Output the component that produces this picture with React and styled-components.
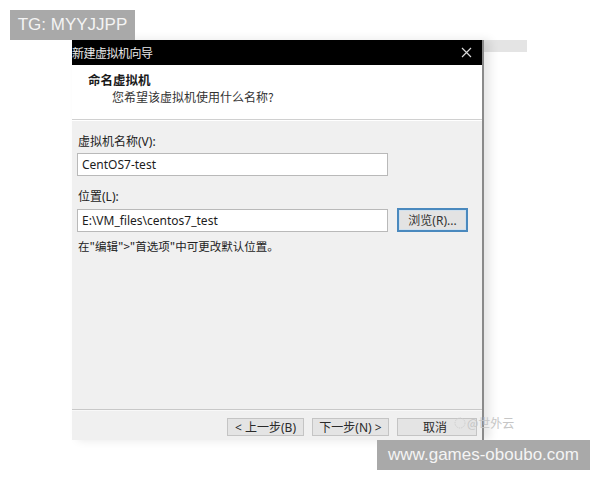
import styled, { createGlobalStyle } from "styled-components";

const GlobalStyle = createGlobalStyle`
	html, body {
		margin: 0;
		background: #ffffff;
	}
	body {
		width: 600px;
		height: 480px;
		overflow: hidden;
		position: relative;
		font-family: "Noto Sans", "Noto Sans CJK SC", sans-serif;
	}
`;

const Scene = styled.div`
	display: flex;
	align-items: flex-start;
	padding: 40px 0 0 72px;
`;

const Window = styled.div`
	width: 410px;
	height: 400px;
	display: flex;
	flex-direction: column;
	background: #f0f0f0;
	border-right: 2px solid #8a8a8a;
	box-shadow: 6px 0 9px rgba(0, 0, 0, 0.1);
	position: relative;
	z-index: 1;
`;

const BackWindow = styled.div`
	width: 43px;
	height: 12px;
	background: #e4e4e4;
`;

const TitleBar = styled.div`
	height: 25px;
	background: #000000;
	display: flex;
	align-items: center;
	justify-content: space-between;
	color: #e8e8e8;
	font-family: "Noto Sans CJK SC", sans-serif;
	font-size: 12px;
	letter-spacing: -0.5px;
`;

const Close = styled.span`
	width: 28px;
	display: flex;
	justify-content: center;
	margin-right: 2px;
`;

const Header = styled.div`
	height: 55px;
	background: #ffffff;
	border-bottom: 1px solid #d0d0d0;
	box-shadow: 0 1px 0 #ffffff;
	padding: 6px 0 0 16px;
	box-sizing: border-box;
	font-family: "Noto Sans CJK SC", sans-serif;
	color: #1a1a1a;
`;

const Heading = styled.div`
	font-size: 12.5px;
	font-weight: 700;
	line-height: 17px;
`;

const Subheading = styled.div`
	font-size: 12px;
	line-height: 17px;
	padding-left: 24px;
	color: #333;
`;

const Body = styled.div`
	flex: 1;
	padding: 14px 0 0 5px;
	display: flex;
	flex-direction: column;
	font-family: "Noto Sans", "Noto Sans CJK SC", sans-serif;
	font-size: 12px;
	color: #222;
`;

const Label = styled.div`
	height: 16px;
	line-height: 16px;
	margin: ${(p) => p.$top || 0}px 0 3px 1px;
`;

const Row = styled.div`
	display: flex;
	align-items: center;
	gap: 9px;
`;

const Field = styled.div`
	width: 311px;
	height: 23px;
	box-sizing: border-box;
	background: #ffffff;
	border: 1px solid #b9b9b9;
	padding: 0 4px;
	display: flex;
	align-items: center;
	color: #1c1c1c;
`;

const Browse = styled.div`
	width: 71px;
	height: 24px;
	box-sizing: border-box;
	border: 2px solid #4a89be;
	background: #e3e3e3;
	display: flex;
	align-items: center;
	justify-content: center;
	color: #333;
	box-shadow: inset 0 0 0 1px #cfe0ee;
`;

const Hint = styled.div`
	margin: 6px 0 0 1px;
	font-family: "Noto Sans CJK SC", sans-serif;
	font-size: 11.5px;
	color: #222;
`;

const Footer = styled.div`
	height: 31px;
	border-top: 1px solid #c8c8c8;
	box-shadow: inset 0 1px 0 #f8f8f8;
	box-sizing: border-box;
	display: flex;
	align-items: flex-start;
	padding: 8px 0 0 155px;
	gap: 8px;
`;

const Button = styled.div`
	width: ${(p) => p.$w || 77}px;
	height: 18px;
	box-sizing: border-box;
	border: 1px solid #c4c4c4;
	background: #e4e4e4;
	display: flex;
	align-items: center;
	justify-content: ${(p) => (p.$right ? "flex-end" : "center")};
	padding-right: ${(p) => (p.$right ? "29px" : "0")};
	font-family: "Noto Sans", "Noto Sans CJK SC", sans-serif;
	font-size: 12px;
	color: #2a2a2a;
`;

const Mark = styled.div`
	position: absolute;
	left: ${(p) => p.$x}px;
	top: ${(p) => p.$y}px;
	width: ${(p) => p.$w}px;
	height: 30px;
	background: #a9a9a9;
	color: #f4f4f4;
	font-family: "Liberation Sans", Arial, sans-serif;
	font-size: 17px;
	display: flex;
	align-items: center;
	justify-content: center;
	z-index: 2;
`;

const Credit = styled.div`
	position: absolute;
	left: 454px;
	top: 414px;
	color: #c6c6c6;
	font-family: "Noto Sans CJK SC", sans-serif;
	font-size: 12px;
	z-index: 2;
	display: flex;
	align-items: center;
	gap: 1px;
`;

function App() {
	return (
		<>
			<GlobalStyle />
			<Scene>
				<Window>
					<TitleBar>
						<span>新建虚拟机向导</span>
						<Close>
							<svg width="11" height="11" viewBox="0 0 11 11">
								<path d="M1 1 L10 10 M10 1 L1 10" stroke="#d8d8d8" strokeWidth="1.2" />
							</svg>
						</Close>
					</TitleBar>
					<Header>
						<Heading>命名虚拟机</Heading>
						<Subheading>您希望该虚拟机使用什么名称?</Subheading>
					</Header>
					<Body>
						<Label>虚拟机名称(V):</Label>
						<Field>CentOS7-test</Field>
						<Label $top={13}>位置(L):</Label>
						<Row>
							<Field>E:\VM_files\centos7_test</Field>
							<Browse>浏览(R)...</Browse>
						</Row>
						<Hint>在"编辑"&gt;"首选项"中可更改默认位置。</Hint>
					</Body>
					<Footer>
						<Button>&lt; 上一步(B)</Button>
						<Button>下一步(N) &gt;</Button>
						<Button $w={80} $right>取消</Button>
					</Footer>
				</Window>
				<BackWindow />
			</Scene>
			<Mark $x={10} $y={10} $w={125}>TG: MYYJJPP</Mark>
			<Mark $x={377} $y={440} $w={213}>www.games-oboubo.com</Mark>
			<Credit>
				<svg width="12" height="12" viewBox="0 0 12 12">
					<circle cx="6" cy="6" r="5" fill="none" stroke="#cfcfcf" strokeDasharray="1.5 1" />
				</svg>
				<span>@世外云</span>
			</Credit>
		</>
	);
}

export default App;
